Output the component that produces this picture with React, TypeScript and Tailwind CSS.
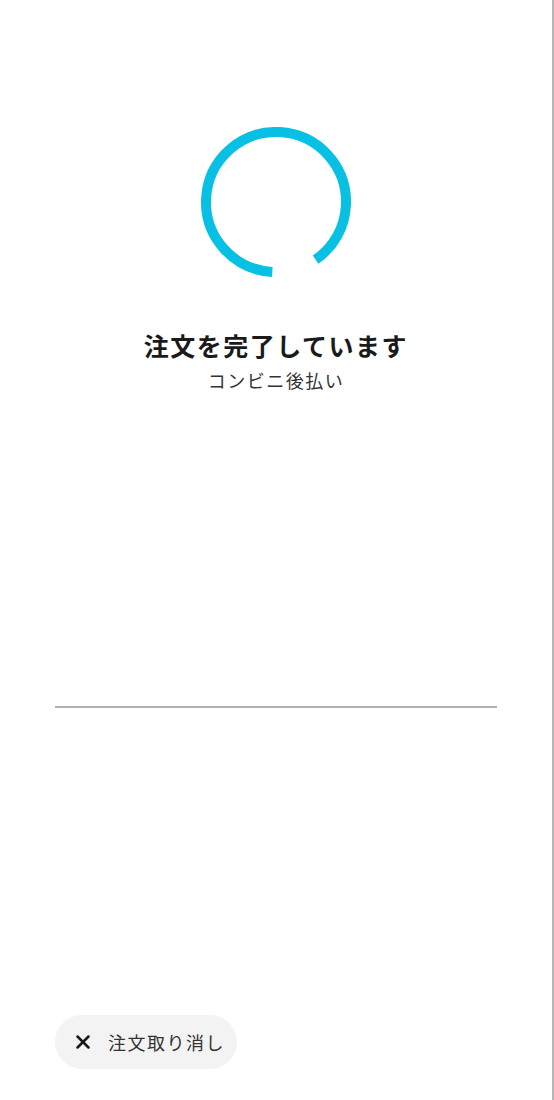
import { X } from "lucide-react";

const Spinner = () => {
  const r = 70;
  const c = 2 * Math.PI * r;
  const dash = (322 / 360) * c;
  return (
    <svg width="150" height="150" viewBox="0 0 150 150">
      <circle
        cx="75"
        cy="75"
        r={r}
        fill="none"
        stroke="#08bfe4"
        strokeWidth="10"
        strokeDasharray={`${dash} ${c}`}
        transform="rotate(93 75 75)"
      />
    </svg>
  );
};

export default function App() {
  return (
    <div
      className="w-[554px] h-[1100px] bg-white border-r-2 border-[#b5b5b5] flex flex-col items-center"
      style={{ fontFamily: '"Noto Sans CJK JP", "Noto Sans", sans-serif' }}
    >
      <div className="mt-[127px]">
        <Spinner />
      </div>
      <h1 className="mt-[52px] text-[25px] leading-[32px] font-bold tracking-[1.5px] text-[#1a1a1a]">
        注文を完了しています
      </h1>
      <p className="mt-[7px] text-[18px] leading-[24px] tracking-[1.5px] text-[#333]">
        コンビニ後払い
      </p>
      <div className="mt-[314px] w-[442px] h-[2px] bg-[#b0b0b0]" />
      <div className="mt-auto mb-[31px] self-start ml-[55px]">
        <button className="h-[54px] w-[182px] rounded-full bg-[#f3f3f3] flex items-center pl-[17px]">
          <X className="w-[22px] h-[22px] text-[#1a1a1a]" strokeWidth={2.8} />
          <span className="ml-[14px] text-[18px] tracking-[1.5px] text-[#333]">注文取り消し</span>
        </button>
      </div>
    </div>
  );
}
